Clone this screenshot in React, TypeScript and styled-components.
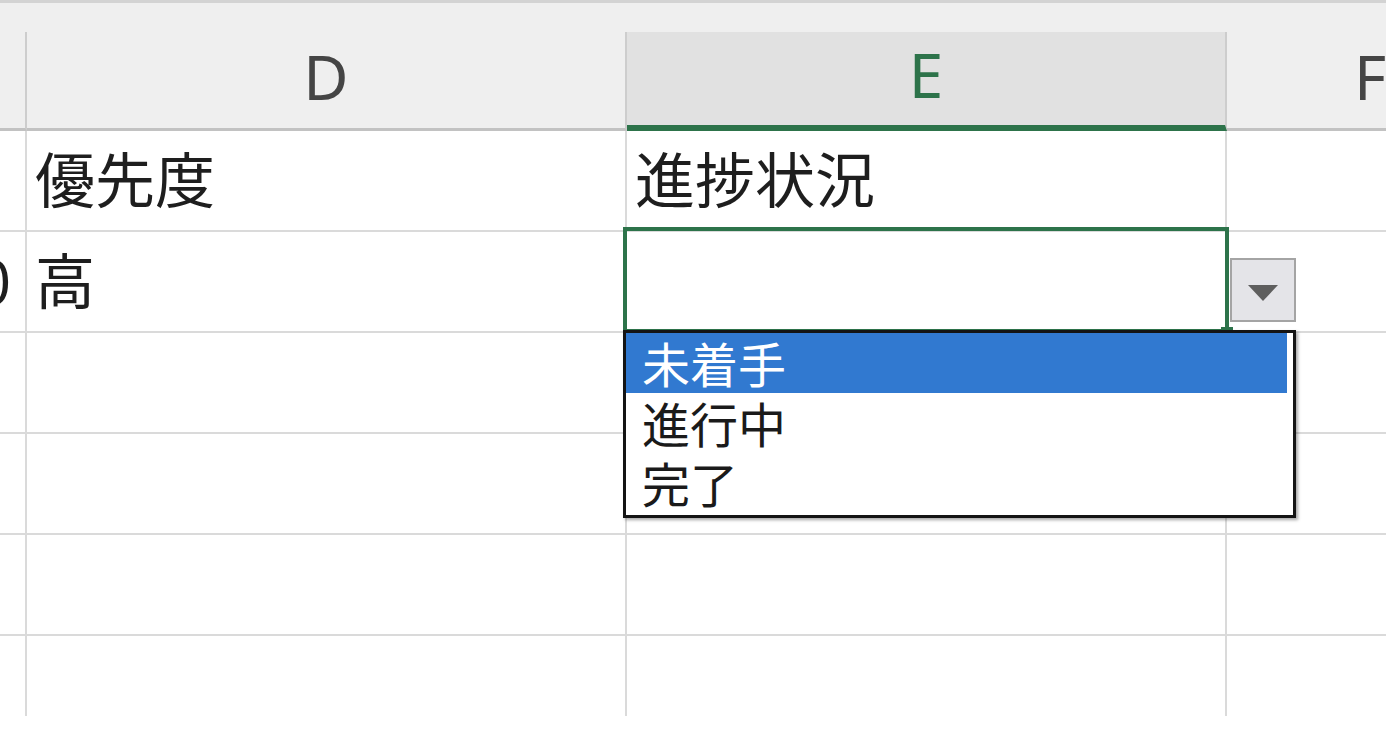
import styled, { createGlobalStyle } from "styled-components";

const GlobalStyle = createGlobalStyle`
  * { box-sizing: border-box; }
  html, body { margin: 0; padding: 0; background: #fff; }
  body {
    font-family: "Noto Sans CJK JP", "Noto Sans", sans-serif;
  }
`;

// C (cut), D, E, F (cut at the right edge)
const COLS = "27px 600px 600px 286px";
const GREEN = "#2d734a";

const Sheet = styled.div`
  width: 1386px;
  height: 730px;
  overflow: hidden;
  background: #fff;
`;

const TopStrip = styled.div`
  width: 1386px;
  height: 32px;
  border-top: 3px solid #d3d3d3;
  background: #efefef;
`;

const HeaderRow = styled.div`
  display: grid;
  grid-template-columns: ${COLS};
  width: 1386px;
  height: 99px;
  background: #efefef;
`;

const HeaderCell = styled.div<{ $active?: boolean; $last?: boolean }>`
  display: flex;
  align-items: center;
  justify-content: center;
  padding-bottom: 9px;
  font-family: "Noto Sans", "Open Sans", sans-serif;
  font-size: 62px;
  line-height: 1;
  color: ${({ $active }) => ($active ? GREEN : "#454545")};
  background: ${({ $active }) => ($active ? "#e1e1e1" : "transparent")};
  border-right: ${({ $last }) => ($last ? "none" : "2px solid #cdcdcd")};
  border-bottom: ${({ $active }) =>
    $active ? `6px solid ${GREEN}` : "3px solid #c2c2c2"};
`;

const Body = styled.div`
  display: grid;
  grid-template-columns: ${COLS};
  grid-auto-rows: 101px;
  width: 1386px;
  height: 585px;
  overflow: hidden;
`;

const Cell = styled.div<{ $last?: boolean; $right?: boolean }>`
  position: relative;
  display: flex;
  align-items: center;
  justify-content: ${({ $right }) => ($right ? "flex-end" : "flex-start")};
  padding: 0 ${({ $right }) => ($right ? "14px" : "0")} 7px 8px;
  font-size: 60px;
  line-height: 1;
  color: #1e1e1e;
  white-space: nowrap;
  border-right: ${({ $last }) => ($last ? "none" : "2px solid #dadada")};
  border-bottom: 2px solid #dadada;
`;

const Selection = styled.div`
  position: absolute;
  top: -5px;
  left: -4px;
  right: -4px;
  bottom: -2px;
  border: 4px solid ${GREEN};
  pointer-events: none;
`;

const FillHandle = styled.div`
  position: absolute;
  right: -8px;
  bottom: -8px;
  width: 12px;
  height: 10px;
  background: ${GREEN};
`;

const DropButton = styled.div`
  position: absolute;
  left: 603px;
  top: 26px;
  width: 66px;
  height: 64px;
  display: flex;
  align-items: center;
  justify-content: center;
  padding-top: 6px;
  background: #e4e4e8;
  border: 2px solid #a4a4a4;
`;

const List = styled.div`
  position: absolute;
  left: -4px;
  top: 98px;
  width: 673px;
  height: 188px;
  padding: 0 6px 0 0;
  background: #fff;
  border: 3px solid #141414;
  box-shadow: 2px 2px 3px rgba(0, 0, 0, 0.35);
  z-index: 2;
`;

const Item = styled.div<{ $selected?: boolean }>`
  height: 60px;
  display: flex;
  align-items: center;
  padding: 0 0 2px 16px;
  font-size: 48px;
  line-height: 1;
  color: ${({ $selected }) => ($selected ? "#fff" : "#1a1a1a")};
  background: ${({ $selected }) => ($selected ? "#3179d0" : "transparent")};
`;

const rows: string[][] = [
  ["", "優先度", "進捗状況", ""],
  ["0", "高", "", ""],
  ["", "", "", ""],
  ["", "", "", ""],
  ["", "", "", ""],
  ["", "", "", ""],
];

const options = ["未着手", "進行中", "完了"];

const Dropdown = () => (
  <>
    <Selection>
      <FillHandle />
    </Selection>
    <DropButton>
      <svg width="30" height="16" viewBox="0 0 30 16">
        <polygon points="0,0 30,0 15,16" fill="#5e5e5e" />
      </svg>
    </DropButton>
    <List>
      {options.map((o, i) => (
        <Item key={o} $selected={i === 0}>
          {o}
        </Item>
      ))}
    </List>
  </>
);

export default function App() {
  return (
    <Sheet>
      <GlobalStyle />
      <TopStrip />
      <HeaderRow>
        <HeaderCell />
        <HeaderCell>D</HeaderCell>
        <HeaderCell $active>E</HeaderCell>
        <HeaderCell $last>F</HeaderCell>
      </HeaderRow>
      <Body>
        {rows.map((row, r) =>
          row.map((val, c) => (
            <Cell key={`${r}-${c}`} $last={c === 3} $right={c === 0}>
              {val}
              {r === 1 && c === 2 && <Dropdown />}
            </Cell>
          ))
        )}
      </Body>
    </Sheet>
  );
}
